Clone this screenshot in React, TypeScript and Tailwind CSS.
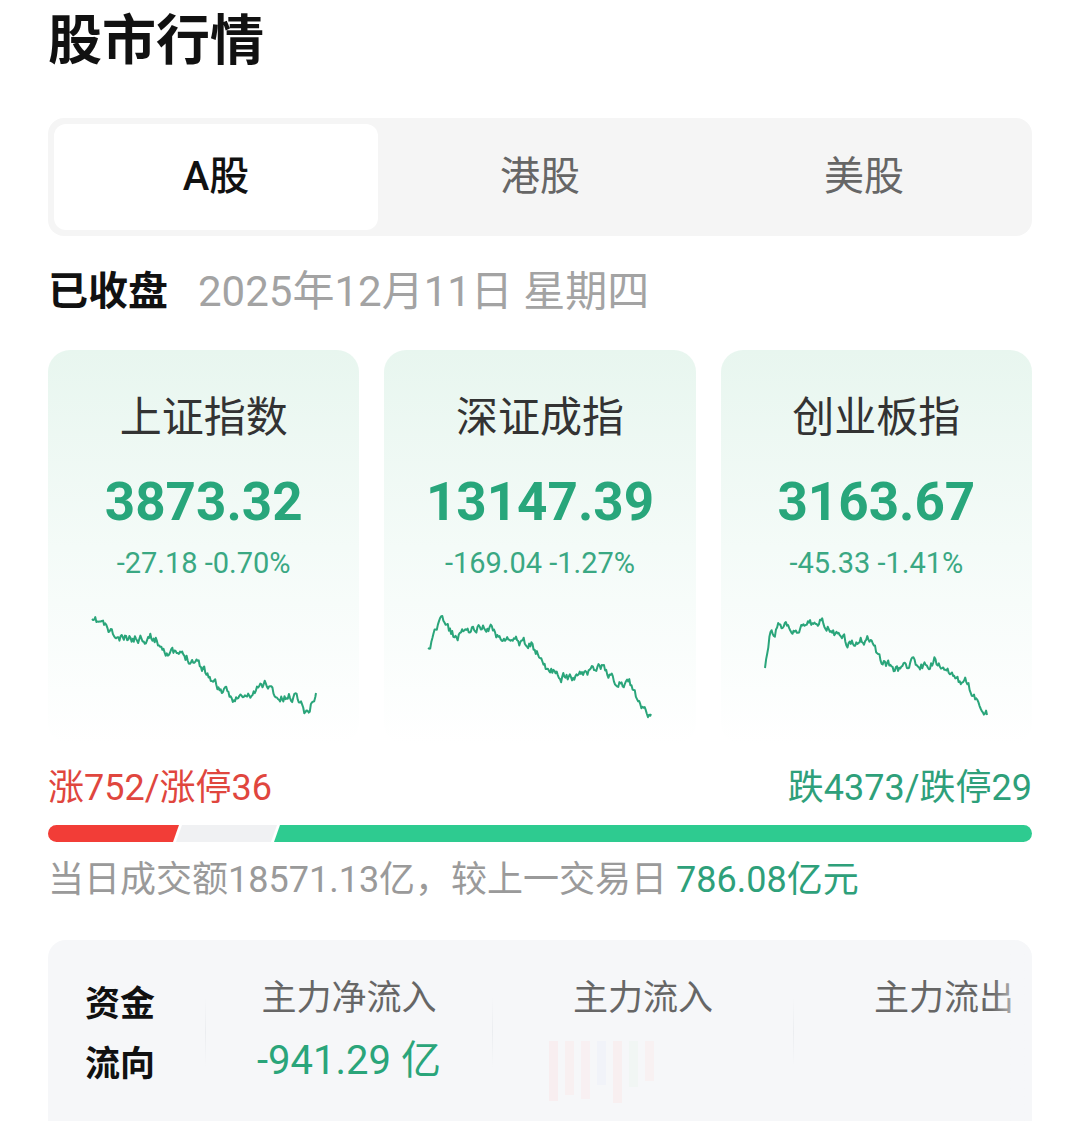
import React from 'react';

const FONT = "font-['Roboto','Noto_Sans_CJK_SC',sans-serif]";

type Pt = [number, number];

// deterministic noise so the sparkline looks the same every render
const rng = (seed: number) => {
  let s = seed;
  return () => {
    s = (s * 16807) % 2147483647;
    return s / 2147483647;
  };
};

const buildPath = (anchors: Pt[], left: number, seed: number) => {
  const r = rng(seed);
  const pts: Pt[] = [];
  let n = 0;
  const x0 = anchors[0][0];
  const x1 = anchors[anchors.length - 1][0];
  for (let x = x0; x <= x1; x += 1.1) {
    let i = 0;
    while (i < anchors.length - 2 && anchors[i + 1][0] < x) i++;
    const [ax, ay] = anchors[i];
    const [bx, by] = anchors[i + 1];
    const t = bx === ax ? 0 : (x - ax) / (bx - ax);
    const y = ay + (by - ay) * Math.min(1, Math.max(0, t));
    n = n * 0.6 + (r() - 0.5) * 8;
    pts.push([x - left, y + n - 600]);
  }
  const last = anchors[anchors.length - 1];
  pts.push([last[0] - left, last[1] - 600]);
  return 'M' + pts.map(([x, y]) => `${x.toFixed(1)},${y.toFixed(1)}`).join(' L');
};

const indices = [
  {
    name: '上证指数',
    value: '3873.32',
    change: '-27.18 -0.70%',
    left: 48,
    seed: 11,
    anchors: [
      [92, 623], [101, 622], [118, 640], [144, 637], [153, 637], [170, 653], [197, 660],
      [218, 687], [231, 698], [249, 697], [266, 682], [279, 700], [297, 695], [307, 714], [316, 693],
    ] as Pt[],
  },
  {
    name: '深证成指',
    value: '13147.39',
    change: '-169.04 -1.27%',
    left: 385,
    seed: 29,
    anchors: [
      [429, 652], [436, 630], [442, 623], [457, 637], [475, 627], [488, 625], [507, 643],
      [533, 643], [544, 665], [562, 677], [583, 677], [601, 665], [618, 683], [631, 685],
      [642, 703], [652, 714],
    ] as Pt[],
  },
  {
    name: '创业板指',
    value: '3163.67',
    change: '-45.33 -1.41%',
    left: 721,
    seed: 47,
    anchors: [
      [765, 672], [770, 637], [780, 625], [793, 630], [807, 623], [823, 622], [833, 630],
      [847, 643], [867, 638], [872, 640], [882, 662], [900, 670], [913, 663], [927, 665],
      [935, 660], [947, 673], [960, 682], [967, 683], [975, 698], [987, 715],
    ] as Pt[],
  },
];

const IndexCard: React.FC<(typeof indices)[number]> = ({ name, value, change, left, seed, anchors }) => (
  <div className="rounded-[22px] bg-gradient-to-b from-[#e8f6ef] via-[#f4fbf8] to-white pt-[43px] pb-[15px] flex flex-col items-center">
    <div className="text-[42px] leading-[50px] text-[#333]">{name}</div>
    <div className="mt-[29px] text-[53px] leading-[60px] font-bold text-[#28a67b]">{value}</div>
    <div className="mt-[14px] text-[29px] leading-[34px] text-[#3aa883]">{change}</div>
    <svg className="mt-[20px] self-stretch" width="311" height="130" viewBox="0 0 311 130">
      <path d={buildPath(anchors, left, seed)} fill="none" stroke="#2aa57a" strokeWidth="2" strokeLinejoin="round" />
    </svg>
  </div>
);

const Divider = () => (
  <div className="w-px h-[70px] mt-[20px] bg-gradient-to-b from-transparent via-[#ebedf0] to-transparent" />
);

export default function App() {
  return (
    <div className={`${FONT} bg-white w-[1080px] h-[1121px] overflow-hidden px-[48px] pt-[12px]`}>
      <h1 className="text-[54px] leading-[60px] font-semibold text-[#111]">股市行情</h1>

      {/* market tabs */}
      <div className="mt-[46px] h-[118px] rounded-[16px] bg-[#f5f5f5] p-[6px] grid grid-cols-3">
        <div className="rounded-[12px] bg-white flex items-center justify-center text-[40px] font-medium text-[#111]">A股</div>
        <div className="flex items-center justify-center text-[40px] text-[#666]">港股</div>
        <div className="flex items-center justify-center text-[40px] text-[#666]">美股</div>
      </div>

      <div className="mt-[32px] flex items-center leading-[48px]">
        <span className="text-[40px] font-bold text-[#111]">已收盘</span>
        <span className="ml-[30px] text-[42px] text-[#a3a3a3]">2025年12月11日 星期四</span>
      </div>

      <div className="mt-[34px] grid grid-cols-3 gap-[25px]">
        {indices.map((i) => (
          <IndexCard key={i.name} {...i} />
        ))}
      </div>

      <div className="mt-[23px] flex justify-between text-[36px] leading-[40px]">
        <span className="text-[#e0463e]">涨752/涨停36</span>
        <span className="text-[#2ea07a]">跌4373/跌停29</span>
      </div>

      {/* advance / decline bar */}
      <div className="mt-[17px] h-[17px] rounded-full overflow-hidden flex">
        <div className="w-[131px] bg-[#f23d37] [clip-path:polygon(0_0,100%_0,calc(100%_-_6px)_100%,0_100%)]" />
        <div className="-ml-[3px] w-[101px] bg-[#f0f1f3] [clip-path:polygon(6px_0,100%_0,calc(100%_-_6px)_100%,0_100%)]" />
        <div className="-ml-[3px] flex-1 bg-[#2ecb90] [clip-path:polygon(6px_0,100%_0,100%_100%,0_100%)]" />
      </div>

      <div className="mt-[18px] text-[36px] leading-[40px] text-[#9a9a9a]">
        当日成交额18571.13亿，较上一交易日 <span className="text-[#2ea07a]">786.08亿元</span>
      </div>

      {/* money flow */}
      <div className="relative mt-[40px] h-[200px] rounded-t-[18px] bg-[#f6f7f9] overflow-hidden">
        <div className="flex w-[1100px] pt-[37px]">
          <div className="w-[157px] pl-[37px] flex flex-col text-[35px] font-bold text-[#111] leading-[44px]">
            <span className="mt-[6px]">资金</span>
            <span className="mt-[16px]">流向</span>
          </div>
          <Divider />
          <div className="w-[286px] flex flex-col items-center">
            <span className="text-[35px] leading-[44px] text-[#666]">主力净流入</span>
            <span className="mt-[15px] text-[40px] leading-[50px] text-[#2aa57a]">-941.29 亿</span>
          </div>
          <Divider />
          <div className="w-[300px] flex flex-col">
            <span className="self-center text-[35px] leading-[44px] text-[#666]">主力流入</span>
            <div className="mt-[20px] ml-[56px] flex items-start gap-[7px] h-[64px] opacity-40">
              <div className="w-[9px] h-[60px] bg-[#fde3e3]" />
              <div className="w-[9px] h-[54px] bg-[#fde6e6]" />
              <div className="w-[9px] h-[58px] bg-[#fbe8e8]" />
              <div className="w-[9px] h-[44px] bg-[#eaeefb]" />
              <div className="w-[9px] h-[62px] bg-[#fde5e5]" />
              <div className="w-[9px] h-[46px] bg-[#eaf6ee]" />
              <div className="w-[9px] h-[40px] bg-[#fbeaea]" />
            </div>
          </div>
          <Divider />
          <div className="w-[300px] flex flex-col items-center">
            <span className="text-[35px] leading-[44px] text-[#666]">主力流出</span>
          </div>
        </div>
        <div className="absolute right-0 top-0 h-full w-[40px] bg-gradient-to-r from-transparent to-[#f6f7f9]" />
      </div>
    </div>
  );
}
